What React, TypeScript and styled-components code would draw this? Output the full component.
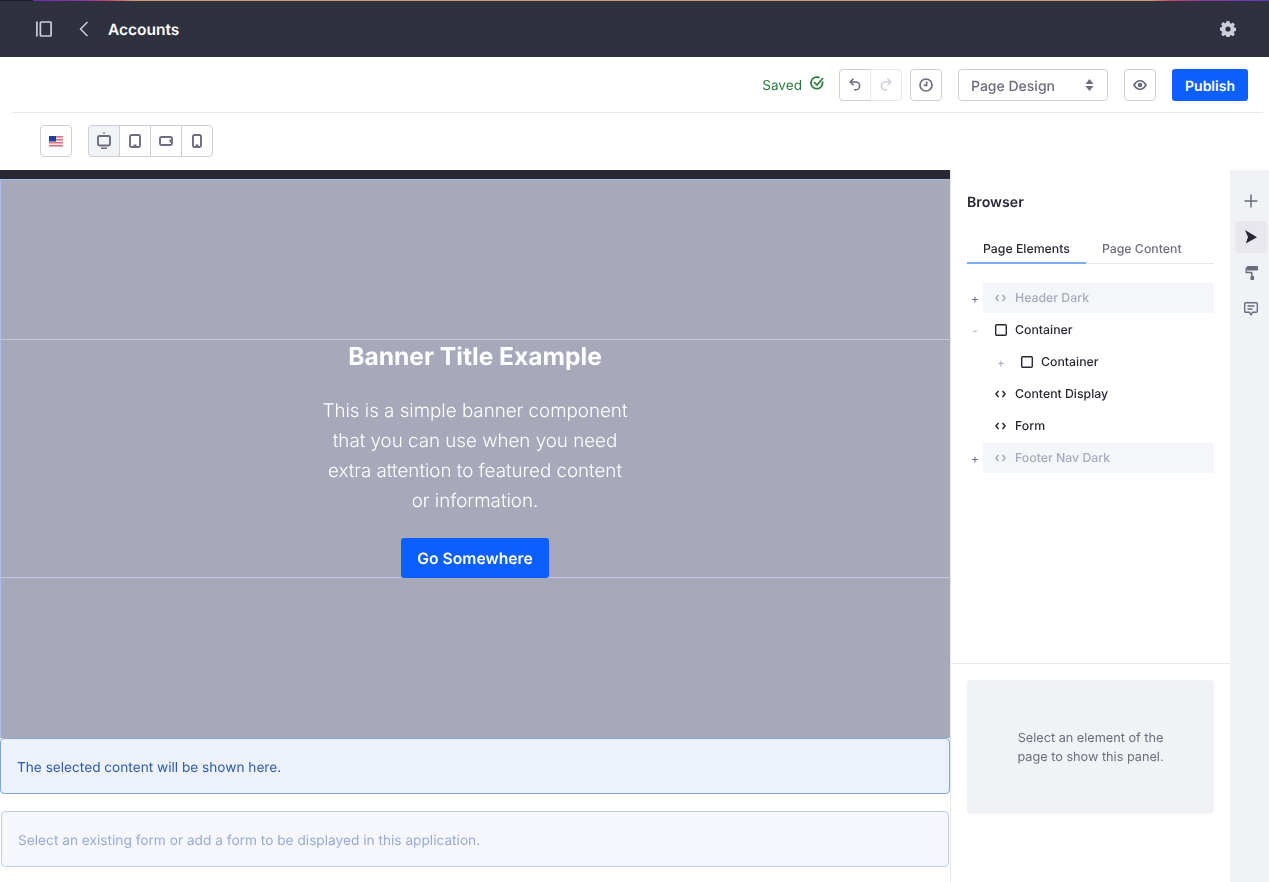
import React from 'react'
import styled, { createGlobalStyle } from 'styled-components'

const GlobalStyle = createGlobalStyle`
  html, body {
    margin: 0;
    padding: 0;
    background: #fff;
    overflow: hidden;
  }
  body {
    font-family: "Inter", "Liberation Sans", sans-serif;
    color: #272833;
    text-rendering: geometricPrecision;
  }
  * {
    box-sizing: border-box;
  }
`

const Page = styled.div`
  width: 1269px;
  height: 882px;
  display: flex;
  flex-direction: column;
  overflow: hidden;
  will-change: opacity;
`

const TopBar = styled.header`
  height: 57px;
  flex: none;
  display: flex;
  align-items: center;
  padding: 0 33px 0 36px;
  background: #30313f;
  border-top: 1px solid transparent;
  border-image: linear-gradient(
      90deg,
      #1c1c2c 0,
      #1c1c2c 34px,
      #6a2fb0 34px,
      #8f38a0 90px,
      #c4476c 108px,
      #d39a75 135px,
      #d39a75 1150px,
      #c4476c 1170px,
      #8f38a0 1200px,
      #5a3fc0 1269px
    )
    1;
`

const TopIcon = styled.span<{ $gap?: number }>`
  display: flex;
  margin-right: ${(p) => p.$gap ?? 0}px;
  color: #cdced9;
`

const Title = styled.span`
  font-size: 15.5px;
  font-weight: 600;
  color: #fff;
  flex: 1;
`

const ActionRow = styled.div`
  height: 56px;
  flex: none;
  margin: 0 6px 0 12px;
  padding-right: 15px;
  display: flex;
  align-items: center;
  justify-content: flex-end;
  border-bottom: 1px solid #e7e7ed;
`

const SavedLabel = styled.span`
  display: flex;
  align-items: flex-start;
  gap: 8px;
  margin-right: 15px;
  padding-top: 4px;
  font-size: 13.6px;
  line-height: 17px;
  color: #287d3c;
  & > svg {
    margin-top: -2px;
  }
`

const ButtonGroup = styled.div<{ $gap?: number }>`
  display: flex;
  margin-right: ${(p) => p.$gap ?? 0}px;
`

const IconButton = styled.button<{ $active?: boolean; $faded?: boolean; $gap?: number }>`
  width: 32px;
  height: 32px;
  padding: 0;
  margin-right: ${(p) => p.$gap ?? 0}px;
  display: flex;
  align-items: center;
  justify-content: center;
  background: ${(p) => (p.$active ? '#f1f2f5' : '#fff')};
  color: ${(p) => (p.$faded ? '#cdced9' : '#6b6c7e')};
  border: 1px solid ${(p) => (p.$faded ? '#e7e7ed' : '#cdced9')};
  border-radius: 4px;
`

const JoinedButton = styled(IconButton)`
  border-radius: 0;
  margin-left: -1px;
  &:first-child {
    margin-left: 0;
    border-radius: 4px 0 0 4px;
  }
  &:last-child {
    border-radius: 0 4px 4px 0;
  }
`

const SelectBox = styled.div`
  width: 150px;
  height: 32px;
  margin-right: 16px;
  padding: 3px 13px 0 12px;
  display: flex;
  align-items: center;
  justify-content: space-between;
  border: 1px solid #cdced9;
  border-radius: 4px;
  font-size: 14px;
  font-weight: 500;
  color: #6b6c7e;
  & > svg {
    margin-top: -3px;
  }
`

const PublishButton = styled.button`
  width: 76px;
  height: 32px;
  margin-left: 16px;
  padding: 3px 0 0;
  border: 0;
  border-radius: 3px;
  background: #0b5fff;
  color: #fff;
  font-family: inherit;
  font-size: 14px;
  font-weight: 600;
  text-rendering: inherit;
`

const DeviceRow = styled.div`
  height: 57px;
  flex: none;
  padding: 12px 0 0 40px;
  display: flex;
  align-items: flex-start;
`

const Workspace = styled.div`
  flex: 1;
  min-height: 0;
  display: flex;
`

const Canvas = styled.main`
  width: 951px;
  flex: none;
  display: flex;
  flex-direction: column;
  border-right: 1px solid #e7e7ed;
`

const DarkStrip = styled.div`
  height: 9px;
  flex: none;
  background: #272833;
`

const Banner = styled.section`
  width: 950px;
  height: 559px;
  flex: none;
  display: grid;
  grid-template-rows: 160px 238px 160px;
  background: #a7a8ba;
  border: 1px solid #a9c0ee;
  border-width: 1px 0 0 1px;
`

const BannerEdge = styled.div`
  border-bottom: 1px solid #bcc8e4;
`

const BannerMiddle = styled.div`
  padding-right: 1px;
  display: flex;
  flex-direction: column;
  align-items: center;
  border-bottom: 1px solid #bcc8e4;
  color: #fff;
`

const BannerTitle = styled.h1`
  margin: -1px 0 0;
  height: 34px;
  font-size: 24.6px;
  line-height: 34px;
  font-weight: 700;
`

const BannerText = styled.p`
  margin: 23px 0 0;
  font-size: 18.75px;
  font-weight: 300;
  line-height: 30px;
  text-align: center;
`

const BannerButton = styled.button`
  width: 148px;
  height: 40px;
  flex: none;
  margin-top: 22px;
  padding: 0;
  border: 0;
  border-radius: 3px;
  background: #0b5fff;
  color: #fff;
  font-family: inherit;
  font-size: 15.7px;
  font-weight: 600;
  text-rendering: inherit;
`

const ContentNotice = styled.div`
  width: 950px;
  height: 56px;
  flex: none;
  padding: 3px 0 0 16px;
  display: flex;
  align-items: center;
  background: #edf2fa;
  border: 1px solid #80a4e6;
  border-radius: 4px;
  font-size: 13.65px;
  color: #2e5aac;
`

const FormNotice = styled.div`
  width: 948px;
  height: 56px;
  flex: none;
  margin: 17px 0 0 1px;
  padding: 3px 0 0 16px;
  display: flex;
  align-items: center;
  background: #f5f7fc;
  border: 1px solid #b9cdf0;
  border-radius: 4px;
  font-size: 13.7px;
  color: #97abd5;
`

const SidePanel = styled.aside`
  width: 279px;
  flex: none;
  display: flex;
  flex-direction: column;
`

const BrowserPane = styled.div`
  height: 494px;
  flex: none;
  padding: 24px 16px 0;
  border-bottom: 1px solid #e7e7ed;
`

const PaneTitle = styled.h2`
  margin: 0;
  font-size: 14.2px;
  line-height: 17px;
  font-weight: 600;
`

const Tabs = styled.div`
  display: flex;
  margin-top: 21px;
  border-bottom: 1px solid #e7e7ed;
`

const Tab = styled.span<{ $active?: boolean }>`
  height: 32px;
  margin-bottom: -1px;
  padding: 9px 16px 0;
  font-size: 12.3px;
  line-height: 16px;
  font-weight: 500;
  color: ${(p) => (p.$active ? '#272833' : '#6b6c7e')};
  border-bottom: 2px solid ${(p) => (p.$active ? '#80acff' : 'transparent')};
`

const Tree = styled.ul`
  list-style: none;
  margin: 19px 0 0;
  padding: 0;
  display: flex;
  flex-direction: column;
  gap: 2px;
`

const TreeRow = styled.li<{ $depth?: number }>`
  height: 30px;
  display: flex;
  align-items: center;
  padding-left: ${(p) => (p.$depth ?? 0) * 26}px;
`

const Toggle = styled.span<{ $muted?: boolean }>`
  width: 16px;
  flex: none;
  text-align: center;
  font-size: 12px;
  color: ${(p) => (p.$muted ? '#a7a9bc' : '#6b6c7e')};
`

const TreeLabel = styled.div<{ $disabled?: boolean; $box?: boolean }>`
  flex: 1;
  height: 30px;
  display: flex;
  align-items: center;
  gap: ${(p) => (p.$box ? 8 : 9)}px;
  padding: 0 0 1px 12px;
  font-size: 12.3px;
  font-weight: 500;
  color: ${(p) => (p.$disabled ? '#a7a9bc' : '#272833')};
  background: ${(p) => (p.$disabled ? '#f5f6f9' : 'transparent')};
`

const EmptyBox = styled.div`
  height: 134px;
  margin: 16px 16px 0;
  padding-top: 2px;
  display: flex;
  align-items: center;
  justify-content: center;
  text-align: center;
  background: #f1f2f5;
  border-radius: 4px;
  font-size: 12.7px;
  line-height: 19px;
  color: #6b6c7e;
`

const Rail = styled.nav`
  width: 39px;
  flex: none;
  padding: 15px 2px 0 5px;
  display: flex;
  flex-direction: column;
  gap: 4px;
  background: #f1f2f5;
`

const RailButton = styled.span<{ $active?: boolean }>`
  width: 32px;
  height: 32px;
  display: flex;
  align-items: center;
  justify-content: center;
  border-radius: 4px;
  color: #6b6c7e;
  background: ${(p) => (p.$active ? '#e7e7ed' : 'transparent')};
`

const PanelToggleIcon = () => (
  <svg width="16" height="16" viewBox="0 0 16 16" fill="none" stroke="currentColor" strokeWidth="1.7">
    <path d="M.9.5v15" />
    <rect x="4.400" y="1" width="10.700" height="14" rx="0.800" />
  </svg>
)

const BackIcon = () => (
  <svg width="10" height="16" viewBox="0 0 10 16" fill="none" stroke="currentColor" strokeWidth="1.500">
    <path d="M8.500 1 1.500 8l7 7" />
  </svg>
)

const GearIcon = () => (
  <svg width="16" height="16" viewBox="0 0 16 16" fill="currentColor">
    <path
      fillRule="evenodd"
      d="M6.600 0h2.800l.4 2.100 1.300.6 1.800-1.200 2 2-1.200 1.800.6 1.300 2.100.4v2.800l-2.100.4-.6 1.300 1.200 1.800-2 2-1.800-1.200-1.300.6-.4 2.100H6.600l-.4-2.100-1.300-.6-1.800 1.200-2-2 1.200-1.800-.6-1.300L-.4 9.400V6.600l2.100-.4.6-1.300-1.200-1.800 2-2 1.800 1.200 1.300-.6zM8 5.400a2.600 2.600 0 1 0 0 5.200 2.600 2.600 0 0 0 0-5.200z"
    />
  </svg>
)

const SavedIcon = () => (
  <svg width="14" height="14" viewBox="0 0 14 14" fill="none" stroke="currentColor" strokeWidth="1.700">
    <path d="M12.400 5.400A5.800 5.800 0 1 1 9.600 1.800" />
    <path d="m4 6 3 3 6-7" />
  </svg>
)

const UndoIcon = () => (
  <svg width="12" height="13" viewBox="0 0 12 13" fill="none" stroke="currentColor" strokeWidth="1.600">
    <path d="M4.500.8 1.300 4l3.200 3.200" />
    <path d="M1.500 4h5.200a3.900 3.900 0 0 1 0 7.800H5" />
  </svg>
)

const RedoIcon = () => (
  <svg width="12" height="13" viewBox="0 0 12 13" fill="none" stroke="currentColor" strokeWidth="1.600">
    <path d="M7.500.8 10.700 4 7.500 7.200" />
    <path d="M10.500 4H5.300a3.900 3.900 0 0 0 0 7.800H7" />
  </svg>
)

const ClockIcon = () => (
  <svg width="14" height="14" viewBox="0 0 14 14" fill="none" stroke="currentColor" strokeWidth="1.700">
    <circle cx="7" cy="7" r="6" />
    <path d="M7.600 3.400V7.400H4.600" />
  </svg>
)

const SortIcon = () => (
  <svg width="9" height="14" viewBox="0 0 9 14" fill="currentColor">
    <path d="M4.500 1 8.500 6h-8zM4.500 13 .5 8h8z" />
  </svg>
)

const EyeIcon = () => (
  <svg width="14" height="10" viewBox="0 0 14 10" fill="currentColor">
    <path
      fillRule="evenodd"
      d="M7 0c3 0 5.600 2 7 5-1.400 3-4 5-7 5S1.400 8 0 5c1.400-3 4-5 7-5zm0 1.600C5 1.600 3.300 2.900 2.200 5 3.300 7.100 5 8.400 7 8.400s3.700-1.300 4.800-3.400C10.700 2.900 9 1.600 7 1.600zM7 2.700a2.300 2.300 0 1 1 0 4.600 2.300 2.300 0 0 1 0-4.600z"
    />
  </svg>
)

const FlagIcon = () => (
  <svg width="14" height="11" viewBox="0 0 14 11">
    <rect width="14" height="11" fill="#f3e6e8" />
    <path d="M0 0h14v1.500H0zM0 3h14v1.500H0zM0 6h14v1.500H0zM0 9h14v1.500H0z" fill="#dd7580" />
    <rect width="7" height="5.500" fill="#1f3f9c" />
  </svg>
)

const DesktopIcon = () => (
  <svg width="14" height="18" viewBox="0 0 14 18">
    <rect x="6.400" y="0" width="1.200" height="2" fill="currentColor" />
    <rect x="1" y="4" width="12" height="9.500" rx="1.500" fill="none" stroke="currentColor" strokeWidth="1.900" />
    <path d="M4 15.500h6V17H4z" fill="currentColor" />
  </svg>
)

const TabletIcon = () => (
  <svg width="12" height="14" viewBox="0 0 12 14">
    <rect x="1" y="1" width="10" height="12" rx="1.500" fill="none" stroke="currentColor" strokeWidth="1.900" />
    <rect x="4.500" y="10.500" width="3" height="1.500" fill="currentColor" />
  </svg>
)

const LandscapeIcon = () => (
  <svg width="14" height="10" viewBox="0 0 14 10">
    <rect x="1" y="1" width="12" height="8" rx="1.500" fill="none" stroke="currentColor" strokeWidth="1.900" />
    <rect x="10.500" y="3.500" width="1.500" height="3" fill="currentColor" />
  </svg>
)

const PhoneIcon = () => (
  <svg width="10" height="14" viewBox="0 0 10 14">
    <rect x="1" y="1" width="8" height="12" rx="1.500" fill="none" stroke="currentColor" strokeWidth="1.900" />
    <rect x="3.500" y="10.500" width="3" height="1.500" fill="currentColor" />
  </svg>
)

const CodeIcon = () => (
  <svg width="11" height="8" viewBox="0 0 11 8" fill="none" stroke="currentColor" strokeWidth="1.500">
    <path d="M3.500 1 .9 4l2.600 3M7.500 1l2.600 3-2.600 3" />
  </svg>
)

const BoxIcon = () => (
  <svg width="12" height="12" viewBox="0 0 12 12" fill="none" stroke="currentColor" strokeWidth="1.400">
    <rect x="0.700" y="0.700" width="10.600" height="10.600" rx="1" />
  </svg>
)

const PlusIcon = () => (
  <svg width="14" height="14" viewBox="0 0 14 14" fill="none" stroke="currentColor" strokeWidth="1.500">
    <path d="M7 .5v13M.5 7h13" />
  </svg>
)

const CursorIcon = () => (
  <svg width="12" height="14" viewBox="0 0 12 14" fill="#272833">
    <path d="M0 0 12 7.300 .8 13.500 3 7z" />
  </svg>
)

const RollerIcon = () => (
  <svg width="14" height="14" viewBox="0 0 14 14" fill="currentColor">
    <path d="M3 0h10a1 1 0 0 1 1 1v2.500a1 1 0 0 1-1 1H3z" />
    <path d="M1.500 1.500H3V3.200H2.800v2.600H8.500V10H10v4H6.500v-4H7V7.300H1.500z" />
  </svg>
)

const CommentIcon = () => (
  <svg width="14" height="14" viewBox="0 0 14 14" fill="none" stroke="currentColor" strokeWidth="1.400">
    <path d="M1.700.7h10.600a1 1 0 0 1 1 1v7.600a1 1 0 0 1-1 1H8.600L7 12.800 5.400 10.300H1.700a1 1 0 0 1-1-1V1.700a1 1 0 0 1 1-1z" />
    <path d="M3.500 4h7M3.500 7h5" />
  </svg>
)

type Node = {
  label: string
  toggle?: string
  depth?: number
  box?: boolean
  disabled?: boolean
}

const nodes: Node[] = [
  { label: 'Header Dark', toggle: '+', disabled: true },
  { label: 'Container', toggle: '-', box: true },
  { label: 'Container', toggle: '+', depth: 1, box: true },
  { label: 'Content Display' },
  { label: 'Form' },
  { label: 'Footer Nav Dark', toggle: '+', disabled: true },
]

export default function App() {
  return (
    <>
      <GlobalStyle />
      <Page>
        <TopBar>
          <TopIcon $gap={27}>
            <PanelToggleIcon />
          </TopIcon>
          <TopIcon $gap={19}>
            <BackIcon />
          </TopIcon>
          <Title>Accounts</Title>
          <TopIcon>
            <GearIcon />
          </TopIcon>
        </TopBar>

        <ActionRow>
          <SavedLabel>
            Saved <SavedIcon />
          </SavedLabel>
          <ButtonGroup $gap={8}>
            <JoinedButton aria-label="Undo">
              <UndoIcon />
            </JoinedButton>
            <JoinedButton aria-label="Redo" $faded>
              <RedoIcon />
            </JoinedButton>
          </ButtonGroup>
          <IconButton aria-label="History" $gap={16}>
            <ClockIcon />
          </IconButton>
          <SelectBox>
            Page Design
            <SortIcon />
          </SelectBox>
          <IconButton aria-label="Preview">
            <EyeIcon />
          </IconButton>
          <PublishButton>Publish</PublishButton>
        </ActionRow>

        <DeviceRow>
          <ButtonGroup $gap={16}>
            <IconButton aria-label="Language">
              <FlagIcon />
            </IconButton>
          </ButtonGroup>
          <ButtonGroup>
            <JoinedButton aria-label="Desktop" $active>
              <DesktopIcon />
            </JoinedButton>
            <JoinedButton aria-label="Tablet">
              <TabletIcon />
            </JoinedButton>
            <JoinedButton aria-label="Landscape phone">
              <LandscapeIcon />
            </JoinedButton>
            <JoinedButton aria-label="Portrait phone">
              <PhoneIcon />
            </JoinedButton>
          </ButtonGroup>
        </DeviceRow>

        <Workspace>
          <Canvas>
            <DarkStrip />
            <Banner>
              <BannerEdge />
              <BannerMiddle>
                <BannerTitle>Banner Title Example</BannerTitle>
                <BannerText>
                  This is a simple banner component
                  <br />
                  that you can use when you need
                  <br />
                  extra attention to featured content
                  <br />
                  or information.
                </BannerText>
                <BannerButton>Go Somewhere</BannerButton>
              </BannerMiddle>
              <div />
            </Banner>
            <ContentNotice>The selected content will be shown here.</ContentNotice>
            <FormNotice>Select an existing form or add a form to be displayed in this application.</FormNotice>
          </Canvas>

          <SidePanel>
            <BrowserPane>
              <PaneTitle>Browser</PaneTitle>
              <Tabs>
                <Tab $active>Page Elements</Tab>
                <Tab>Page Content</Tab>
              </Tabs>
              <Tree>
                {nodes.map((node, i) => (
                  <TreeRow key={i} $depth={node.depth}>
                    <Toggle $muted={node.depth === 1 || node.toggle === '-'}>{node.toggle}</Toggle>
                    <TreeLabel $disabled={node.disabled} $box={node.box}>
                      {node.box ? <BoxIcon /> : <CodeIcon />}
                      {node.label}
                    </TreeLabel>
                  </TreeRow>
                ))}
              </Tree>
            </BrowserPane>
            <EmptyBox>
              Select an element of the
              <br />
              page to show this panel.
            </EmptyBox>
          </SidePanel>

          <Rail>
            <RailButton>
              <PlusIcon />
            </RailButton>
            <RailButton $active>
              <CursorIcon />
            </RailButton>
            <RailButton>
              <RollerIcon />
            </RailButton>
            <RailButton>
              <CommentIcon />
            </RailButton>
          </Rail>
        </Workspace>
      </Page>
    </>
  )
}
